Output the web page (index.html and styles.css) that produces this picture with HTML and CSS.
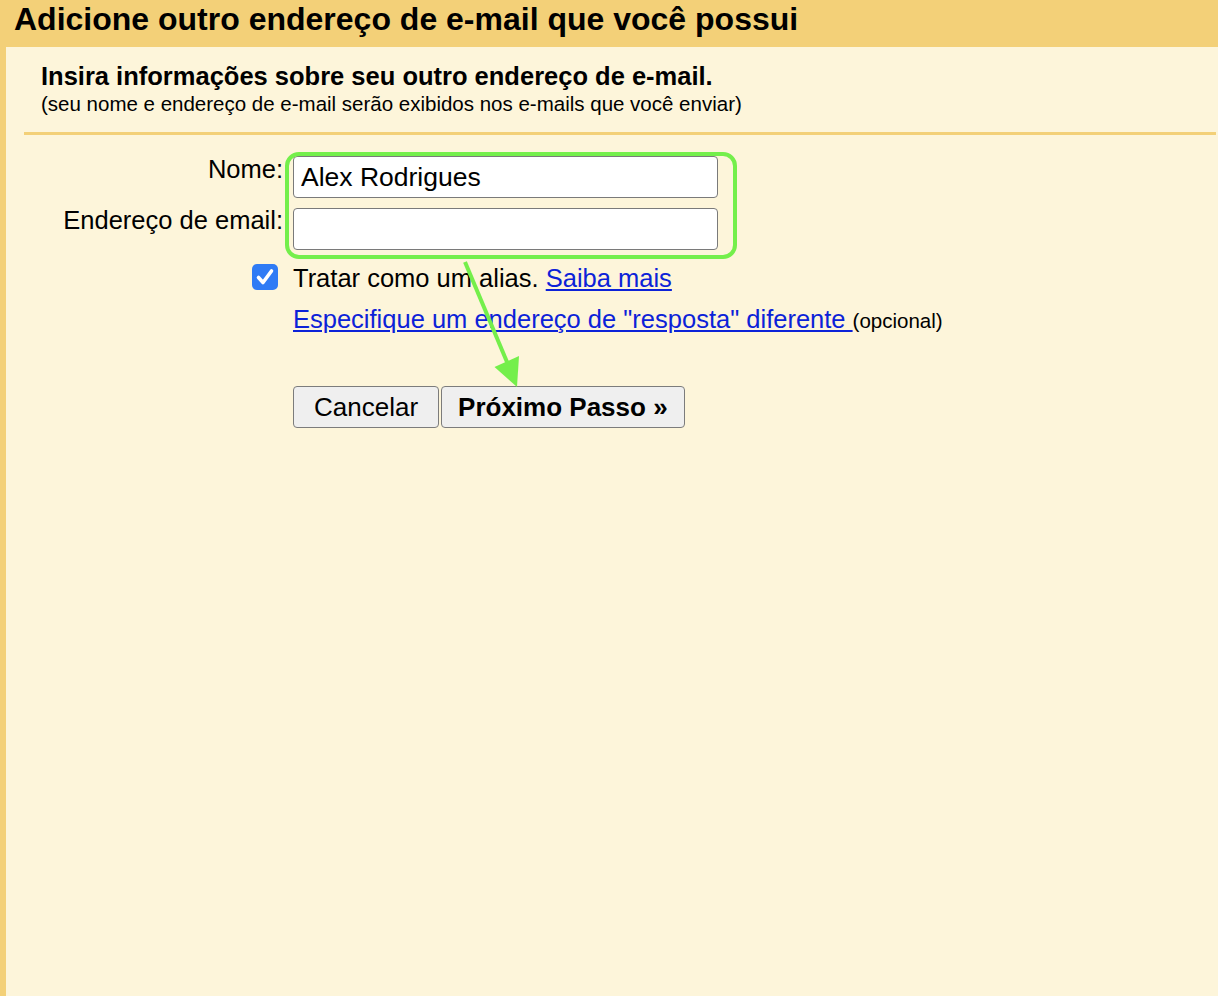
FILE: index.html
```html
<!DOCTYPE html>
<html lang="pt-BR">
<head>
<meta charset="utf-8">
<title>Adicione outro endereço de e-mail</title>
<link rel="stylesheet" href="styles.css">
</head>
<body>
<div class="header">Adicione outro endereço de e-mail que você possui</div>
<div class="panel">
  <div class="intro">
    <div class="intro-title">Insira informações sobre seu outro endereço de e-mail.</div>
    <div class="intro-note">(seu nome e endereço de e-mail serão exibidos nos e-mails que você enviar)</div>
  </div>
  <div class="rule"></div>
  <div class="form">
    <label class="label">Nome:</label>
    <div class="field"><input class="text-input" type="text" value="Alex Rodrigues"></div>
    <label class="label label-email">Endereço de email:</label>
    <div class="field field-email"><input class="text-input" type="text" value=""></div>
    <div class="check-cell">
      <svg class="checkbox" width="26" height="26" viewBox="0 0 26 26"><rect x="0" y="0" width="26" height="26" rx="5" fill="#2f7bf5"/><path d="M6.5 13.5 L11 18.5 L19.5 7" fill="none" stroke="#fff" stroke-width="3.6" stroke-linecap="round" stroke-linejoin="round"/></svg>
    </div>
    <div class="check-text">Tratar como um alias. <a class="link" href="#">Saiba mais</a></div>
    <div class="reply-row"><a class="link" href="#">Especifique um endereço de "resposta" diferente </a><span class="optional">(opcional)</span></div>
    <div class="buttons">
      <button class="btn btn-cancel" type="button">Cancelar</button><button class="btn btn-next" type="button">Próximo Passo »</button>
    </div>
  </div>
</div>
<svg class="overlay" width="1218" height="996" viewBox="0 0 1218 996">
  <rect x="287" y="154" width="448" height="103" rx="12" ry="12" fill="none" stroke="#74ef4b" stroke-width="4"/>
  <line x1="465" y1="262" x2="507" y2="362" stroke="#74ef4b" stroke-width="4"/>
  <polygon points="517,387 494.5,367 519,356" fill="#74ef4b"/>
</svg>
</body>
</html>
```
FILE: styles.css
```css
html, body {
  margin: 0;
  padding: 0;
}
body {
  position: relative;
  width: 1218px;
  height: 996px;
  overflow: hidden;
  background: #fdf5da;
  font-family: "Liberation Sans", Arial, sans-serif;
  color: #000;
}
.header {
  box-sizing: border-box;
  height: 47px;
  padding: 1px 0 0 14px;
  background: #f3d078;
  font-size: 32px;
  line-height: 37px;
  font-weight: bold;
  white-space: nowrap;
}
.panel {
  box-sizing: border-box;
  height: 949px;
  border-left: 6px solid #f3d078;
  background: #fdf5da;
}
.intro {
  padding: 15px 0 0 35px;
}
.intro-title {
  font-size: 25.5px;
  line-height: 29px;
  font-weight: bold;
  white-space: nowrap;
}
.intro-note {
  margin-top: 2px;
  font-size: 20.5px;
  line-height: 22px;
  white-space: nowrap;
}
.rule {
  height: 3px;
  margin: 17px 2px 0 18px;
  background: #f3d078;
}
.form {
  display: grid;
  grid-template-columns: 277px auto;
  column-gap: 10px;
  justify-content: start;
  align-items: start;
  margin-top: 21px;
  font-size: 25.5px;
  line-height: 29px;
}
.label {
  text-align: right;
  white-space: nowrap;
  margin-top: -1px;
}
.field-email {
  margin-top: 10px;
}
.label-email {
  margin-top: 8px;
}
.text-input {
  display: block;
  box-sizing: border-box;
  width: 425px;
  height: 42px;
  margin: 0;
  padding: 0 7px;
  border: 1px solid #7a7a7a;
  border-radius: 4px;
  background: #fff;
  font-family: "Liberation Sans", Arial, sans-serif;
  font-size: 26.5px;
  color: #000;
  outline: none;
}
.check-cell {
  justify-self: end;
  margin: 14px 5px 0 0;
  height: 26px;
}
.checkbox {
  display: block;
}
.check-text {
  margin-top: 14px;
  white-space: nowrap;
}
.link {
  color: #0c22d8;
  text-decoration: underline;
}
.reply-row {
  grid-column: 2;
  margin-top: 12px;
  white-space: nowrap;
}
.optional {
  font-size: 20.5px;
}
.buttons {
  grid-column: 2;
  display: flex;
  gap: 2px;
  margin-top: 51px;
}
.btn {
  box-sizing: border-box;
  height: 42px;
  margin: 0;
  border: 1px solid #7c7c7c;
  border-radius: 4px;
  background: #efefef;
  font-family: "Liberation Sans", Arial, sans-serif;
  font-size: 26px;
  color: #000;
}
.btn-cancel {
  padding: 0 20px;
}
.btn-next {
  padding: 0 16px;
  font-weight: bold;
}
.overlay {
  position: absolute;
  left: 0;
  top: 0;
  pointer-events: none;
}
```
